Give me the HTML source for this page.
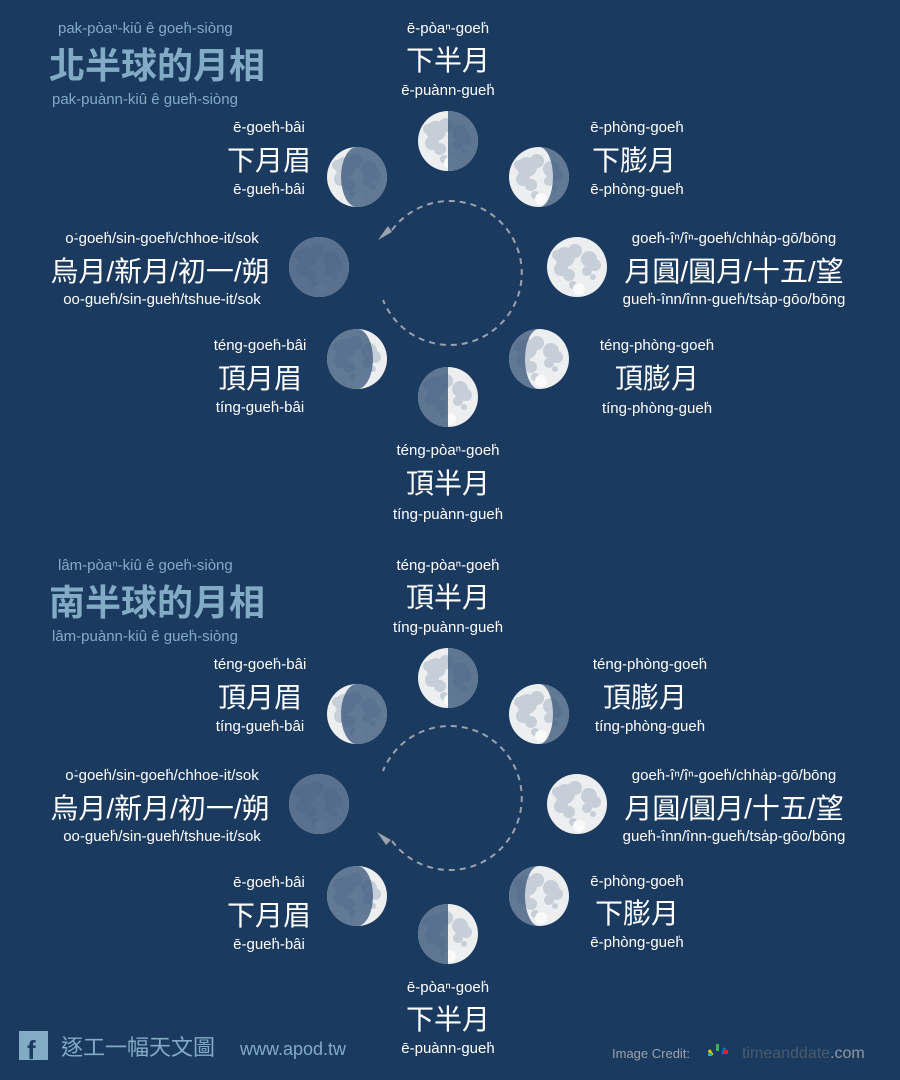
<!DOCTYPE html>
<html><head><meta charset="utf-8"><style>
html,body{margin:0;padding:0;background:#1b3a5f;}
svg{display:block}
text{font-family:"Liberation Sans","Noto Sans CJK TC",sans-serif;fill:#fff}
.p{font-size:15px}
.c{font-size:28px}
.t{fill:#82abc6}
</style></head><body>
<svg width="900" height="1080" viewBox="0 0 900 1080" xmlns="http://www.w3.org/2000/svg">
<rect width="900" height="1080" fill="#1b3a5f"/>
<defs>
<g id="full">
<circle r="30" fill="#eceef0"/>
<g fill="#c6ced8">
<circle cx="-12" cy="-10" r="10"/><circle cx="-2" cy="-16" r="7"/><circle cx="-16" cy="2" r="7"/>
<circle cx="-8" cy="8" r="6"/><circle cx="12" cy="-8" r="8"/><circle cx="18" cy="-2" r="6"/>
<circle cx="10" cy="4" r="5"/><circle cx="16" cy="10" r="3"/><circle cx="-4" cy="18" r="4"/>
<circle cx="-20" cy="-12" r="5"/>
</g>
<circle cx="2" cy="22" r="6" fill="#fafafa"/>
</g>
<path id="dR" d="M0,-30 A30,30 0 0 1 0,30 Z"/>
<path id="dL" d="M0,-30 A30,30 0 0 0 0,30 Z"/>
<path id="gibR" d="M0,-30 A30,30 0 0 1 0,30 A14,30 0 0 0 0,-30 Z"/>
<path id="gibL" d="M0,-30 A30,30 0 0 0 0,30 A14,30 0 0 1 0,-30 Z"/>
<path id="creLlit" d="M0,-30 A30,30 0 0 1 0,30 A16,30 0 0 1 0,-30 Z"/>
<path id="creRlit" d="M0,-30 A30,30 0 0 0 0,30 A16,30 0 0 0 0,-30 Z"/>
</defs>

<g id="moons">
<g transform="translate(448,141)"><use href="#full"/><use href="#dR" fill="#3f5b7e" opacity=".82"/></g>
<g transform="translate(539,177)"><use href="#full"/><use href="#gibR" fill="#3f5b7e" opacity=".8"/></g>
<g transform="translate(357,177)"><use href="#full"/><use href="#creLlit" fill="#3f5b7e" opacity=".8"/></g>
<g transform="translate(319,267)"><use href="#full"/><circle r="30" fill="#3f5b7e" opacity=".85"/></g>
<g transform="translate(577,267)"><use href="#full"/></g>
<g transform="translate(357,359)"><use href="#full"/><use href="#creRlit" fill="#3f5b7e" opacity=".8"/></g>
<g transform="translate(539,359)"><use href="#full"/><use href="#gibL" fill="#3f5b7e" opacity=".8"/></g>
<g transform="translate(448,397)"><use href="#full"/><use href="#dL" fill="#3f5b7e" opacity=".82"/></g>
</g>
<use href="#moons" transform="translate(0,537)"/>

<path d="M392,230 A72,72 0 1 1 383,300" fill="none" stroke="#9aa3ad" stroke-width="2" stroke-dasharray="6,5"/>
<path d="M378,240 L392,232 L388,226 Z" fill="#9aa3ad"/>
<path d="M392,841 A72,72 0 1 0 383,771" fill="none" stroke="#9aa3ad" stroke-width="2" stroke-dasharray="6,5"/>
<path d="M377,832 L391,840 L386,845 Z" fill="#9aa3ad"/>

<text class="p t" x="58" y="33">pak-pòaⁿ-kiû ê goeh̍-siòng</text>
<text class="t" x="49" y="78" style="font-size:36px;font-weight:bold">北半球的月相</text>
<text class="p t" x="52" y="104">pak-puànn-kiû ê gueh̍-siòng</text>

<g text-anchor="middle">
<text class="p" x="448" y="33">ē-pòaⁿ-goeh̍</text><text class="c" x="448" y="70">下半月</text><text class="p" x="448" y="95">ē-puànn-gueh̍</text>
<text class="p" x="269" y="132">ē-goeh̍-bâi</text><text class="c" x="269" y="170">下月眉</text><text class="p" x="269" y="194">ē-gueh̍-bâi</text>
<text class="p" x="637" y="132">ē-phòng-goeh̍</text><text class="c" x="634" y="170">下膨月</text><text class="p" x="637" y="194">ē-phòng-gueh̍</text>
<text class="p" x="162" y="243">o͘-goeh̍/sin-goeh̍/chhoe-it/sok</text><text class="c" x="160" y="281">烏月/新月/初一/朔</text><text class="p" x="162" y="304">oo-gueh̍/sin-gueh̍/tshue-it/sok</text>
<text class="p" x="734" y="243">goeh̍-îⁿ/îⁿ-goeh̍/chha̍p-gō͘/bōng</text><text class="c" x="734" y="281">月圓/圓月/十五/望</text><text class="p" x="734" y="304">gueh̍-înn/înn-gueh̍/tsa̍p-gōo/bōng</text>
<text class="p" x="260" y="350">téng-goeh̍-bâi</text><text class="c" x="260" y="388">頂月眉</text><text class="p" x="260" y="412">tíng-gueh̍-bâi</text>
<text class="p" x="657" y="350">téng-phòng-goeh̍</text><text class="c" x="657" y="388">頂膨月</text><text class="p" x="657" y="413">tíng-phòng-gueh̍</text>
<text class="p" x="448" y="455">téng-pòaⁿ-goeh̍</text><text class="c" x="448" y="493">頂半月</text><text class="p" x="448" y="519">tíng-puànn-gueh̍</text>
</g>

<text class="p t" x="58" y="570">lâm-pòaⁿ-kiû ê goeh̍-siòng</text>
<text class="t" x="49" y="615" style="font-size:36px;font-weight:bold">南半球的月相</text>
<text class="p t" x="52" y="641">lâm-puànn-kiû ê gueh̍-siòng</text>

<g text-anchor="middle">
<text class="p" x="448" y="570">téng-pòaⁿ-goeh̍</text><text class="c" x="448" y="607">頂半月</text><text class="p" x="448" y="632">tíng-puànn-gueh̍</text>
<text class="p" x="260" y="669">téng-goeh̍-bâi</text><text class="c" x="260" y="707">頂月眉</text><text class="p" x="260" y="731">tíng-gueh̍-bâi</text>
<text class="p" x="650" y="669">téng-phòng-goeh̍</text><text class="c" x="645" y="707">頂膨月</text><text class="p" x="650" y="731">tíng-phòng-gueh̍</text>
<text class="p" x="162" y="780">o͘-goeh̍/sin-goeh̍/chhoe-it/sok</text><text class="c" x="160" y="818">烏月/新月/初一/朔</text><text class="p" x="162" y="841">oo-gueh̍/sin-gueh̍/tshue-it/sok</text>
<text class="p" x="734" y="780">goeh̍-îⁿ/îⁿ-goeh̍/chha̍p-gō͘/bōng</text><text class="c" x="734" y="818">月圓/圓月/十五/望</text><text class="p" x="734" y="841">gueh̍-înn/înn-gueh̍/tsa̍p-gōo/bōng</text>
<text class="p" x="269" y="887">ē-goeh̍-bâi</text><text class="c" x="269" y="925">下月眉</text><text class="p" x="269" y="949">ē-gueh̍-bâi</text>
<text class="p" x="637" y="886">ē-phòng-goeh̍</text><text class="c" x="637" y="923">下膨月</text><text class="p" x="637" y="947">ē-phòng-gueh̍</text>
<text class="p" x="448" y="992">ē-pòaⁿ-goeh̍</text><text class="c" x="448" y="1029">下半月</text><text class="p" x="448" y="1053">ē-puànn-gueh̍</text>
</g>

<rect x="19" y="1031" width="29" height="29" fill="#82abc6"/>
<text x="27" y="1059" style="font-size:26px;font-weight:bold;fill:#1b3a5f">f</text>
<text x="61" y="1055" style="font-size:22px;fill:#82abc6">逐工一幅天文圖</text>
<text x="240" y="1055" style="font-size:18px;fill:#82abc6">www.apod.tw</text>
<text x="612" y="1058" style="font-size:13px;fill:#9aa3ad">Image Credit:</text>
<g transform="translate(716,1053)">
<rect x="-6" y="-6" width="3" height="6" fill="#f4c430" transform="rotate(-30)"/>
<rect x="0" y="-9" width="3" height="7" fill="#39b54a"/>
<rect x="5" y="-8" width="3" height="7" fill="#0072bc" transform="rotate(20)"/>
<rect x="8" y="-3" width="4" height="4" fill="#ed1c24"/>
<rect x="-8" y="0" width="4" height="3" fill="#29abe2"/>
</g>
<text x="742" y="1058" style="font-size:16px;fill:#4a5a6e">timeanddate<tspan fill="#8e98a4">.com</tspan></text>
</svg>
</body></html>
